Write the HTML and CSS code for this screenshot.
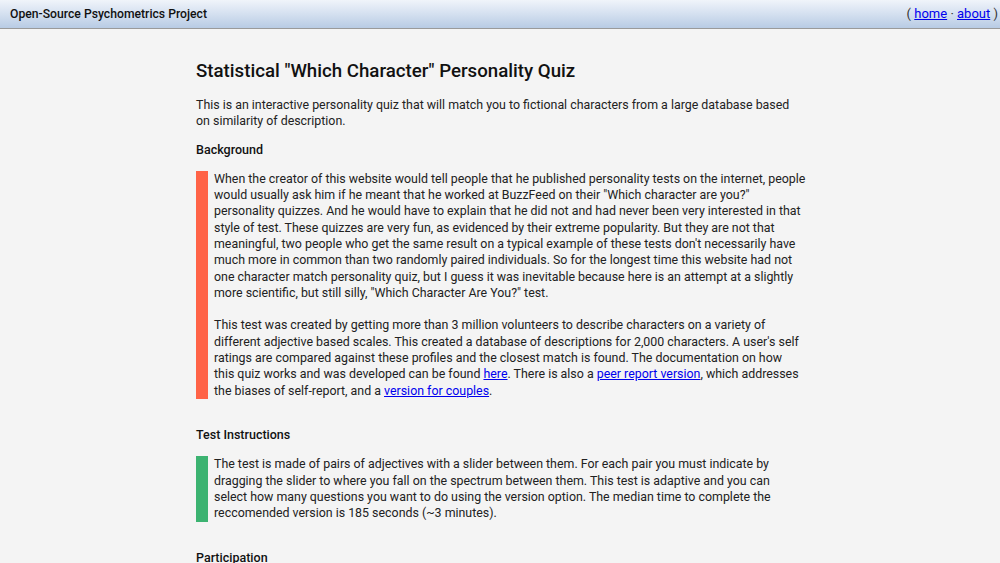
FILE: index.html
```html
<!DOCTYPE html>
<html>
<head>
<meta charset="utf-8">
<link rel="stylesheet" href="styles.css">
</head>
<body>
<div class="topbar">
  <div class="brand">Open-Source Psychometrics Project</div>
  <div class="nav">( <a href="#">home</a> · <a href="#">about</a> )</div>
</div>
<div class="main">
  <h1>Statistical "Which Character" Personality Quiz</h1>
  <p class="intro">This is an interactive personality quiz that will match you to fictional characters from a large database based on similarity of description.</p>
  <h3>Background</h3>
  <div class="block orange">
    <p>When the creator of this website would tell people that he published personality tests on the internet, people would usually ask him if he meant that he worked at BuzzFeed on their "Which character are you?" personality quizzes. And he would have to explain that he did not and had never been very interested in that style of test. These quizzes are very fun, as evidenced by their extreme popularity. But they are not that meaningful, two people who get the same result on a typical example of these tests don't necessarily have much more in common than two randomly paired individuals. So for the longest time this website had not one character match personality quiz, but I guess it was inevitable because here is an attempt at a slightly more scientific, but still silly, "Which Character Are You?" test.</p>
    <p class="narrow">This test was created by getting more than 3 million volunteers to describe characters on a variety of different adjective based scales. This created a database of descriptions for 2,000 characters. A user's self ratings are compared against these profiles and the closest match is found. The documentation on how this quiz works and was developed can be found <a href="#">here</a>. There is also a <a href="#">peer report version</a>, which addresses the biases of self-report, and a <a href="#">version for couples</a>.</p>
  </div>
  <h3>Test Instructions</h3>
  <div class="block green">
    <p>The test is made of pairs of adjectives with a slider between them. For each pair you must indicate by dragging the slider to where you fall on the spectrum between them. This test is adaptive and you can select how many questions you want to do using the version option. The median time to complete the reccomended version is 185 seconds (~3 minutes).</p>
  </div>
  <h3>Participation</h3>
</div>
</body>
</html>
```
FILE: styles.css
```css
html, body {
  margin: 0;
  padding: 0;
  background: #f4f4f4;
  color: #222;
  font-family: Roboto, "Liberation Sans", sans-serif;
  font-size: 12.4px;
  line-height: 16.35px;
}
a { color: #0000ee; }
.topbar {
  display: flex;
  justify-content: space-between;
  align-items: center;
  height: 28px;
  padding: 0 2px 0 10px;
  background: linear-gradient(to bottom, #f0f4fa 0%, #d7e2f1 45%, #b8cbe4 100%);
  border-bottom: 1px solid #9a9a9a;
  font-size: 12.2px;
}
.brand { font-weight: 500; color: #111; }
.nav { color: #333; font-size: 13px; }
.main {
  width: 610px;
  margin: 0 auto;
  padding: 30px 0 0 2px;
}
h1 {
  font-size: 18.7px;
  font-weight: 500;
  line-height: 24px;
  margin: 0 0 14px;
  color: #111;
}
p { margin: 0 0 16px; }
.intro { margin-bottom: 12px; }
h3 {
  font-size: 12.5px;
  font-weight: 500;
  line-height: 16px;
  margin: 0 0 13px;
  color: #111;
}
.block {
  border-left: 12px solid #ff6347;
  padding-left: 6px;
  padding-right: 0.5px;
  margin-bottom: 28px;
}
.block p:last-child { margin-bottom: 0; }
.block p.narrow { padding-right: 2px; }
.block.orange { border-left-color: #ff6347; }
.block.green { border-left-color: #3cb371; }
```
